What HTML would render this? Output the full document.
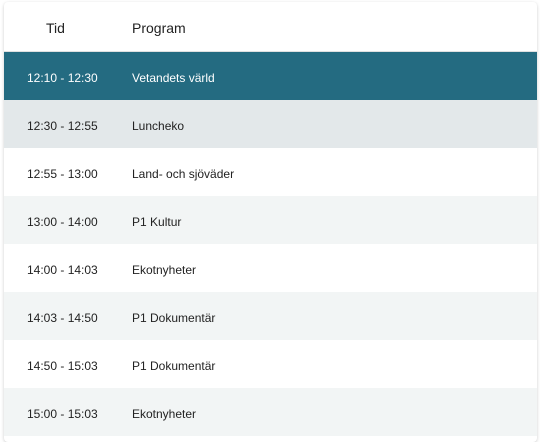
<!DOCTYPE html><html><head><style>
body{margin:0;background:#fff;width:541px;height:423px;overflow:hidden;font-family:"Liberation Sans",sans-serif}
.card{position:absolute;left:4px;top:2px;width:533px;height:440px;background:#fff;border-radius:4px;box-shadow:0 1px 3px rgba(0,0,0,.2)}
.r{height:48px;display:flex;align-items:center;font-size:12px;color:#222;box-sizing:border-box;padding-top:3px}
.h{height:50px;font-size:14px;color:#222;border-bottom:1px solid #e0e0e0;padding-top:3px}
.t{width:128px;box-sizing:border-box;padding-left:23px}
.h .t{padding-left:42px}
.s{background:#246b81;color:#fff}
.g{background:#e3e8ea}.l{background:#f2f5f5}
</style></head><body><div class="card">
<div class="r h"><div class="t">Tid</div><div>Program</div></div>
<div class="r s"><div class="t">12:10 - 12:30</div><div>Vetandets värld</div></div>
<div class="r g"><div class="t">12:30 - 12:55</div><div>Luncheko</div></div>
<div class="r"><div class="t">12:55 - 13:00</div><div>Land- och sjöväder</div></div>
<div class="r l"><div class="t">13:00 - 14:00</div><div>P1 Kultur</div></div>
<div class="r"><div class="t">14:00 - 14:03</div><div>Ekotnyheter</div></div>
<div class="r l"><div class="t">14:03 - 14:50</div><div>P1 Dokumentär</div></div>
<div class="r"><div class="t">14:50 - 15:03</div><div>P1 Dokumentär</div></div>
<div class="r l"><div class="t">15:00 - 15:03</div><div>Ekotnyheter</div></div>
</div></body></html>
